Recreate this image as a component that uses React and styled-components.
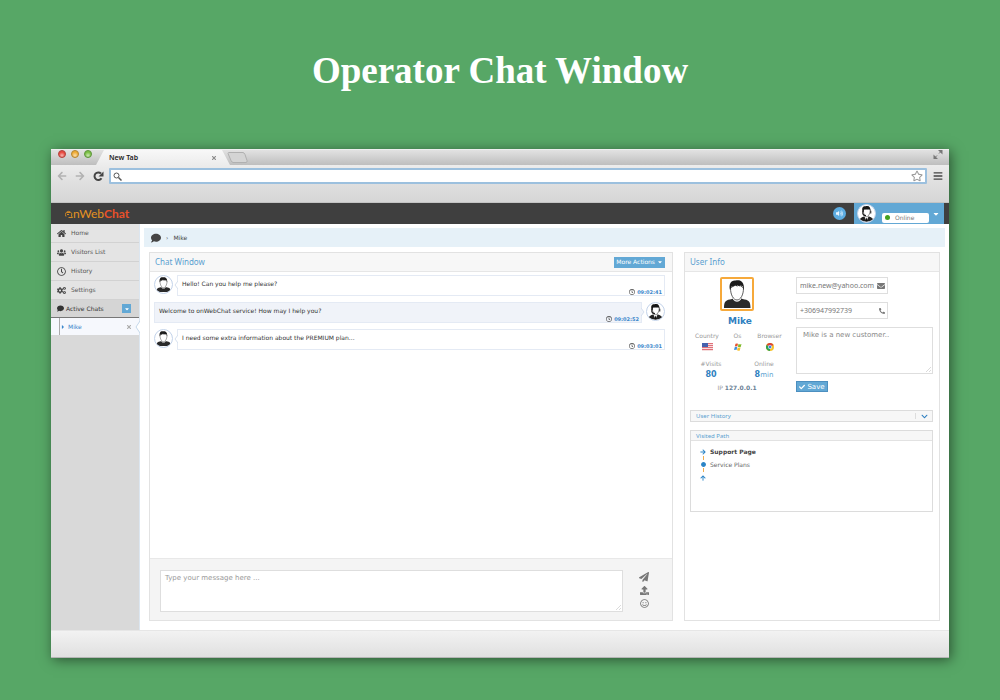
import React from "react";
import styled, { createGlobalStyle, css } from "styled-components";
import {
  FaHome, FaUsers, FaRegClock, FaCogs, FaComment, FaVolumeUp, FaEnvelope, FaPhoneAlt,
  FaPaperPlane, FaUpload, FaRegSmile, FaChevronDown, FaCaretDown, FaCaretRight, FaCheck,
  FaArrowLeft, FaArrowRight, FaRegStar, FaArrowUp, FaCircle, FaTimes, FaBars,
} from "react-icons/fa";

const sans = '"DejaVu Sans", Verdana, sans-serif';
const open = '"Noto Sans", "Open Sans", sans-serif';
const blue = "#62a8d5";

const GlobalStyle = createGlobalStyle`
  *, *::before, *::after { box-sizing: border-box; }
  body { margin: 0; background: #57a766; font-family: ${sans}; font-size: 6px; line-height: 8px; color: #555; }
  h1, h2, h3, p, ul, ol, dl, dd { margin: 0; padding: 0; }
  ul, ol { list-style: none; }
  a { color: inherit; text-decoration: none; }
  button, input, textarea { font: inherit; color: inherit; margin: 0; padding: 0; border: 0; background: none; outline: 0; border-radius: 0; }
  button { display: flex; align-items: center; justify-content: center; cursor: pointer; }
  textarea { display: block; resize: none; }
  svg { display: block; flex: none; }
`;

const Page = styled.div`
  min-height: 100vh;
  padding: 49px 51px 42px;
`;
const Title = styled.h1`
  margin-bottom: 56px;
  color: #fff;
  font: bold 37px/44px "Liberation Serif", serif;
  text-align: center;
`;
const Browser = styled.div`
  background: #fff;
  box-shadow: 2px 2px 12px rgba(0, 0, 0, 0.5);
`;

/* browser frame */
const TabStrip = styled.div`
  display: flex;
  height: 16px;
  background: linear-gradient(#e2e2e2, #bebebe);
  border-top: 1px solid #eee;
`;
const Lights = styled.div`
  display: flex;
  gap: 5px;
  padding: 0 4px 0 7px;
`;
const Light = styled.span`
  width: 8px;
  height: 8px;
  border: 1px solid ${(p) => p.$edge};
  border-radius: 50%;
  background: radial-gradient(circle at 50% 75%, #fff9, transparent 60%), ${(p) => p.$fill};
`;
const Tab = styled.div`
  display: flex;
  align-items: center;
  justify-content: space-between;
  width: 136px;
  padding: 0 15px 0 13px;
  background: linear-gradient(#f8f8f8, #ececec);
  clip-path: polygon(8px 0, 126px 0, 134px 100%, 0 100%);
  color: #222;
  font: 600 7px/12px ${open};
`;
const TabClose = styled.button`
  color: #888;
  font-size: 6px;
`;
const NewTab = styled.button`
  align-self: flex-start;
  margin-top: 2px;
  margin-left: -5px;
`;
const Expand = styled.button`
  margin-left: auto;
  padding-right: 6px;
  align-self: flex-start;
`;
const Toolbar = styled.div`
  display: flex;
  align-items: flex-start;
  height: 38px;
  padding: 3px 6px 0;
  background: linear-gradient(#ececec, #e0e0e0 45%, #d6d6d6);
  border-bottom: 1px solid #c4c4c4;
`;
const NavButton = styled.button`
  width: 18px;
  height: 16px;
  justify-content: flex-start;
  color: ${(p) => (p.$dark ? "#444" : "#b2b2b2")};
`;
const Address = styled.label`
  display: flex;
  align-items: center;
  flex: 1;
  height: 16px;
  margin-left: -2px;
  padding: 0 2px;
  border: 2px solid #9cc0de;
  border-radius: 1px;
  background: #fff;
  input { flex: 1; min-width: 0; font-size: 8px; }
`;
const MenuButton = styled.button`
  width: 16px;
  height: 16px;
  padding-left: 6px;
  color: #444;
`;
const StatusBar = styled.div`
  height: 28px;
  background: linear-gradient(#f2f2f2, #e0e0e0);
  border-top: 1px solid #e6e6e6;
  border-bottom: 1px solid #b5b5b5;
`;

/* application header */
const Header = styled.header`
  display: flex;
  align-items: center;
  height: 21px;
  padding: 0 5px 0 14px;
  background: #3f3f3f;
`;
const Logo = styled.a`
  display: flex;
  align-items: center;
  font: 12px/14px Lato, sans-serif;
  color: #e59222;
  b { color: #e8502a; }
`;
const Sound = styled.button`
  width: 13px;
  height: 13px;
  margin: 0 8px 0 auto;
  border-radius: 50%;
  background: #5dade2;
  color: #e8f5ff;
`;
const Account = styled.div`
  display: flex;
  align-items: center;
  align-self: stretch;
  width: 90px;
  padding: 0 4px 0 3px;
  background: ${blue};
`;
const Status = styled.button`
  flex: 1;
  height: 10px;
  margin: 8px 3px 0 6px;
  padding: 0 3px;
  justify-content: flex-start;
  gap: 5px;
  border-radius: 2px;
  background: #fff;
  color: #777;
`;
const Dot = styled.span`
  width: 5px;
  height: 5px;
  border-radius: 50%;
  background: #45a11f;
`;
const Avatar = styled.svg`
  width: 19px;
  height: 19px;
  border: 1px solid #c3d3ea;
  border-radius: 50%;
  background: #fff;
`;

/* sidebar */
const Body = styled.div`
  display: flex;
  min-height: 406px;
`;
const Sidebar = styled.nav`
  display: flex;
  flex-direction: column;
  width: 89px;
  flex: none;
  background: #d9d9d9;
  border-right: 1px solid #dce6f0;
`;
const NavItem = styled.a`
  display: flex;
  align-items: center;
  gap: 5px;
  height: 19px;
  padding-left: 6px;
  background: #e4e4e4;
  border-bottom: 1px solid #d2d2d2;
  svg { color: #444; }
`;
const ActiveHead = styled.div`
  display: flex;
  align-items: center;
  gap: 2px;
  height: 18px;
  padding: 0 8px 0 6px;
  background: #d5d5d5;
  border-bottom: 1px solid #777;
  color: #333;
  svg { color: #333; }
`;
const Toggle = styled.button`
  width: 9px;
  height: 9px;
  margin-left: auto;
  background: ${blue};
  svg { color: #fff; }
`;
const ActiveChat = styled.div`
  position: relative;
  display: flex;
  align-items: center;
  height: 17px;
  padding: 0 7px 0 8px;
  background: #f6f8fd;
  color: #3b87cb;
  a { margin-left: 4px; }
  button { margin-left: auto; color: #aaa; }
`;
const Branch = styled.span`
  display: flex;
  align-items: center;
  align-self: stretch;
  width: 5px;
  border-left: 1px solid #aaa;
`;
const Notch = styled.svg`
  position: absolute;
  right: -1px;
  top: 3px;
`;

/* content */
const Main = styled.main`
  flex: 1;
  min-width: 0;
  display: flex;
  flex-direction: column;
  padding: 4px 4px 9px;
`;
const Crumbs = styled.div`
  display: flex;
  align-items: center;
  gap: 5px;
  height: 19px;
  padding: 0 7px;
  background: #e6f1f8;
  color: #444;
`;
const Columns = styled.div`
  flex: 1;
  display: grid;
  grid-template-columns: minmax(0, 524fr) minmax(256px, 256fr);
  gap: 11px;
  padding: 5px 5px 0;
`;
const Panel = styled.section`
  display: flex;
  flex-direction: column;
  border: 1px solid #e2e2e2;
`;
const PanelHead = styled.div`
  display: flex;
  align-items: center;
  justify-content: space-between;
  height: 19px;
  padding: 0 7px 0 5px;
  background: #f7f7f7;
  border-bottom: 1px solid #e6e6e6;
  h2 { font: 8px/12px ${open}; color: #5a9fd0; }
`;
const More = styled.button`
  height: 11px;
  padding: 0 2px;
  gap: 2px;
  background: ${blue};
  color: #fff;
`;
const Messages = styled.ol`
  flex: 1;
  display: flex;
  flex-direction: column;
  gap: 6px;
  padding: 3px 7px 0 4px;
`;
const Message = styled.li`
  display: flex;
  align-items: flex-start;
  flex-direction: ${(p) => (p.$own ? "row-reverse" : "row")};
`;
const Bubble = styled.div`
  position: relative;
  flex: 1;
  display: flex;
  flex-direction: column;
  justify-content: space-between;
  height: 21px;
  margin: ${(p) => (p.$own ? "0 4px 0 0" : "0 0 0 4px")};
  padding: 4px 2px 0 4px;
  border: 1px solid #e4eaf4;
  background: ${(p) => (p.$own ? "#f0f3f9" : "#fff")};
  color: #333;
`;
const Tail = styled.svg`
  position: absolute;
  top: 5px;
  ${(p) => (p.$own ? css`right: -4px; transform: scaleX(-1);` : css`left: -4px;`)}
`;
const Time = styled.time`
  display: flex;
  align-items: center;
  justify-content: flex-end;
  gap: 2px;
  color: #3b87cb;
  font-weight: bold;
  font-size: 5px;
  svg { color: #444; }
`;
const Composer = styled.form`
  display: flex;
  gap: 16px;
  height: 62px;
  padding: 11px 23px 8px 10px;
  background: #f4f4f4;
  border-top: 1px solid #e8e8e8;
`;
const AreaWrap = styled.div`
  position: relative;
  flex: ${(p) => (p.$grow ? 1 : "none")};
  align-self: stretch;
`;
const Area = styled.textarea`
  width: 100%;
  height: ${(p) => p.$h}px;
  padding: ${(p) => p.$pad};
  border: 1px solid #dedede;
  background: #fff;
  font-size: 7px;
  color: #888;
  &::placeholder { color: #999; opacity: 1; }
`;
const Grip = styled.svg`
  position: absolute;
  right: 2px;
  bottom: 2px;
`;
const Tools = styled.div`
  display: flex;
  flex-direction: column;
  gap: 4px;
  padding-top: 2px;
  color: #777;
`;

/* user information */
const Info = styled.div`
  flex: 1;
  padding: 5px 6px 0 5px;
`;
const Details = styled.div`
  display: grid;
  grid-template-columns: 94px minmax(0, 1fr);
  gap: 12px;
  min-height: 133px;
`;
const Profile = styled.div`
  display: flex;
  flex-direction: column;
  align-items: center;
`;
const Portrait = styled.svg`
  width: 34px;
  height: 34px;
  border: 2px solid #f6a93b;
  border-radius: 2px;
`;
const Name = styled.h3`
  margin: 4px 0 5px 6px;
  font: bold 9px/12px ${sans};
  color: #2f7fc0;
`;
const Facts = styled.dl`
  display: grid;
  grid-template-columns: ${(p) => p.$cols};
  align-self: stretch;
  margin: 0 -4px 6px 0;
  text-align: center;
  color: #999;
  dd { display: flex; justify-content: center; align-items: center; height: 14px; }
`;
const Figure = styled.span`
  font-size: 7px;
  color: #5a9fd0;
  b { font-size: 8px; color: #2f7fc0; }
`;
const IpLine = styled.p`
  margin-top: -4px;
  color: #999;
  b { color: #6b7f95; }
`;
const Fields = styled.form`
  display: flex;
  flex-direction: column;
  align-items: flex-start;
`;
const Field = styled.label`
  display: flex;
  align-items: center;
  width: 92px;
  height: 17px;
  margin-bottom: 8px;
  padding: 0 2px 0 3px;
  border: 1px solid #dedede;
  color: #777;
  input { flex: 1; min-width: 0; font: 7px/10px ${open}; }
`;
const Save = styled.button`
  width: 32px;
  height: 11px;
  margin-top: 7px;
  gap: 2px;
  border: 1px solid #4c8fc0;
  background: ${blue};
  color: #fff;
  font-size: 7px;
`;
const Box = styled.section`
  margin-bottom: 8px;
  border: 1px solid #dcdcdc;
  min-height: ${(p) => p.$min}px;
`;
const BoxHead = styled.div`
  display: flex;
  align-items: center;
  justify-content: space-between;
  height: 10px;
  padding-left: 5px;
  background: #f7f7f7;
  border-bottom: ${(p) => (p.$line ? "1px solid #e2e2e2" : "0")};
  h3 { font: 6px/8px ${open}; color: #5a9fd0; }
  button { width: 17px; height: 6px; border-left: 1px solid #ddd; color: #2f7fc0; }
`;
const Path = styled.ol`
  padding: 6px 9px;
`;
const Step = styled.li`
  display: flex;
  gap: 4px;
  min-height: 13px;
  line-height: 10px;
  font-weight: ${(p) => (p.$current ? "bold" : "normal")};
  color: ${(p) => (p.$current ? "#444" : "#666")};
`;
const Marker = styled.span`
  display: flex;
  flex-direction: column;
  align-items: center;
  gap: 1px;
  width: 6px;
  padding-top: 2px;
  color: #2b84c6;
  i { width: 1px; height: 4px; background: #f0ad4e; }
`;

/* head and shoulders, shared by the framed portrait and the round avatars */
function Visitor() {
  return (
    <>
      <path d="M3 30c0-7 2-8 8-9l2.500-1q2.500 4 5.500 0l2.500 1c6 1 8 2 8 9z" fill="#2a2a2a" />
      <path d="M12 19v2.500q4 4.500 8 0V19z" fill="#fff" />
      <path d="M9.500 10c0 7 3 12 6.500 12s6.500-5 6.500-12q-6-6-13 0z" fill="#fff" stroke="#333" strokeWidth="0.800" />
      <path d="M9 12C7.500 6 10 2 14.500 2.500c5-1 9 1 8.500 9.500l-1.500-4q-1.500 0-3-1l.500 1.500-3-1.500.500 2-2-2q-2 2-4 1.500z" fill="#1c1c1c" />
    </>
  );
}

function Operator() {
  return (
    <>
      <path d="M3 31c0-7 4-8 9-10l4 4 4-4c5 2 9 3 9 10z" fill="#222" />
      <path d="M12 21l4 10 4-10-4 3z" fill="#fff" />
      <path d="M15 25h2l1 6h-4z" fill="#111" />
      <path d="M10 9c0 8 3 13 6 13s7-5 7-13q-6-5-13 0z" fill="#fff" stroke="#222" />
      <path d="M9 13C6 5 10 2 14 2.500c7-2 10 2 9.500 9l-2-4q-6 2-9 0-2 2-2 6z" fill="#161616" />
      <path d="M9 11v5q1 4 6 4M24 11v5" fill="none" stroke="#222" strokeWidth="2" />
    </>
  );
}

function Grabber() {
  return (
    <Grip width="5" height="5" viewBox="0 0 5 5" stroke="#ccc" strokeWidth="0.700">
      <path d="M0 5L5 0M3 5l2-2" />
    </Grip>
  );
}

const nav = [
  ["Home", FaHome],
  ["Visitors List", FaUsers],
  ["History", FaRegClock],
  ["Settings", FaCogs],
];
const messages = [
  { text: "Hello! Can you help me please?", time: "09:02:41" },
  { text: "Welcome to onWebChat service! How may I help you?", time: "09:02:52", own: true },
  { text: "I need some extra information about the PREMIUM plan...", time: "09:03:01" },
];

function BrowserFrame() {
  return (
    <>
      <TabStrip>
        <Lights>
          <Light $fill="#e9483f" $edge="#b04640" />
          <Light $fill="#f0ac35" $edge="#b28636" />
          <Light $fill="#7bc043" $edge="#5f9440" />
        </Lights>
        <Tab>
          New Tab
          <TabClose aria-label="Close tab"><FaTimes size={6} /></TabClose>
        </Tab>
        <NewTab aria-label="Open a tab">
          <svg width="21" height="11" viewBox="0 0 21 11">
            <path d="M2 .500h14q1 0 2 2l2 6q.500 2-1 2H6q-1 0-2-2l-3-7q0-1 1-1z" fill="#d4d4d4" stroke="#b0b0b0" />
          </svg>
        </NewTab>
        <Expand aria-label="Full screen">
          <svg width="10" height="9" viewBox="0 0 10 9" fill="#777" stroke="#777">
            <path d="M9.500 0v4.500L5 0zM.500 9V4.500L5 9z" stroke="none" />
            <path d="M6 3.500L8 1.500M2 7.500l2-2" />
          </svg>
        </Expand>
      </TabStrip>
      <Toolbar>
        <NavButton aria-label="Back"><FaArrowLeft size={10} /></NavButton>
        <NavButton aria-label="Forward"><FaArrowRight size={10} /></NavButton>
        <NavButton aria-label="Reload" $dark>
          <svg width="11" height="11" viewBox="0 0 11 11" fill="none" stroke="currentColor" strokeWidth="2">
            <path d="M8.500 7.300A3.800 3.800 0 1 1 8 2.500" />
            <path d="M10.500.500v5h-5z" fill="currentColor" stroke="none" />
          </svg>
        </NavButton>
        <Address>
          <svg width="9" height="9" viewBox="0 0 9 9" fill="none" stroke="#555">
            <circle cx="3.500" cy="3.500" r="2.500" />
            <path d="M5.500 5.500l3 3" strokeWidth="1.500" />
          </svg>
          <input type="text" aria-label="Address" />
          <FaRegStar size={12} color="#999" />
        </Address>
        <MenuButton aria-label="Menu"><FaBars size={10} /></MenuButton>
      </Toolbar>
    </>
  );
}

function AppHeader() {
  return (
    <Header>
      <Logo href="#">
        <svg width="8" height="8" viewBox="0 0 8 8" fill="none" stroke="#e59222">
          <path d="M1 6.500A3.200 3.200 0 1 1 6.500 6L7.500 7.500H3.500M2 2.500h3M2 4.500h2" strokeWidth="0.900" />
        </svg>
        <span>nWeb<b>Chat</b></span>
      </Logo>
      <Sound aria-label="Sound"><FaVolumeUp size={7} /></Sound>
      <Account>
        <Avatar viewBox="0 0 32 32"><Operator /></Avatar>
        <Status><Dot />Online</Status>
        <FaCaretDown size={8} color="#fff" />
      </Account>
    </Header>
  );
}

function SideNav() {
  return (
    <Sidebar>
      {nav.map(([label, Icon]) => (
        <NavItem href="#" key={label}><Icon size={9} />{label}</NavItem>
      ))}
      <ActiveHead>
        <FaComment size={7} />
        Active Chats
        <Toggle aria-label="Collapse"><FaCaretDown size={6} /></Toggle>
      </ActiveHead>
      <ActiveChat>
        <Branch><FaCaretRight size={6} /></Branch>
        <a href="#">Mike</a>
        <button aria-label="Close chat"><FaTimes size={6} /></button>
        <Notch width="5" height="12" viewBox="0 0 5 12">
          <path d="M5 0L1 6l4 6" fill="#fff" stroke="#c3d7ea" />
        </Notch>
      </ActiveChat>
    </Sidebar>
  );
}

function ChatPanel() {
  return (
    <Panel>
      <PanelHead>
        <h2>Chat Window</h2>
        <More>More Actions <FaCaretDown size={6} /></More>
      </PanelHead>
      <Messages>
        {messages.map((m) => (
          <Message key={m.time} $own={m.own}>
            <Avatar viewBox="0 0 32 32">{m.own ? <Operator /> : <Visitor />}</Avatar>
            <Bubble $own={m.own}>
              <Tail $own={m.own} width="4" height="8" viewBox="0 0 4 8">
                <path d="M4 0L1 4l3 4" fill={m.own ? "#f0f3f9" : "#fff"} stroke="#d6e0ee" />
              </Tail>
              <p>{m.text}</p>
              <Time><FaRegClock size={6} />{m.time}</Time>
            </Bubble>
          </Message>
        ))}
      </Messages>
      <Composer>
        <AreaWrap $grow>
          <Area aria-label="Message" placeholder="Type your message here ..." $h={42} $pad="3px 4px" />
          <Grabber />
        </AreaWrap>
        <Tools>
          <button type="button" aria-label="Send"><FaPaperPlane size={10} /></button>
          <button type="button" aria-label="Upload"><FaUpload size={9} /></button>
          <button type="button" aria-label="Emoji"><FaRegSmile size={9} /></button>
        </Tools>
      </Composer>
    </Panel>
  );
}

function Flag() {
  return (
    <svg width="11" height="8" viewBox="0 0 11 8">
      <path fill="#f6dede" d="M0 0h11v8H0z" />
      <path stroke="#e0707a" d="M0 .500h11M0 2.500h11M0 4.500h11M0 6.500h11" />
      <path fill="#4562ae" d="M0 0h6v4H0z" />
    </svg>
  );
}
function Windows() {
  return (
    <svg width="8" height="8" viewBox="0 0 8 8">
      <path fill="#e8542c" d="M1.500.800q1.500-.800 2.500 0L3.300 3.600q-1.300-.600-2.500 0z" />
      <path fill="#7fba2b" d="M4.500 1q1.500.800 3 0L6.700 4q-1.500.600-2.800-.200z" />
      <path fill="#3f8fdc" d="M.700 4.200q1.300-.700 2.500 0L2.500 7Q1.300 6.300 0 7z" />
      <path fill="#f8c12c" d="M3.700 4.400q1.500.700 2.800.100L5.800 7.500q-1.500.600-2.800-.200z" />
    </svg>
  );
}
function Chrome() {
  return (
    <svg width="8" height="8" viewBox="0 0 8 8">
      <circle cx="4" cy="4" r="4" fill="#f5c32c" />
      <path fill="#dc4437" d="M4 4L.500 2A4 4 0 0 1 7.500 2z" />
      <path fill="#31a350" d="M4 4L.500 2A4 4 0 0 0 4 8z" />
      <circle cx="4" cy="4" r="1.900" fill="#fff" />
      <circle cx="4" cy="4" r="1.400" fill="#4083e8" />
    </svg>
  );
}

function UserPanel() {
  return (
    <Panel>
      <PanelHead><h2>User Info</h2></PanelHead>
      <Info>
        <Details>
          <Profile>
            <Portrait viewBox="1 1 30 30"><Visitor /></Portrait>
            <Name>Mike</Name>
            <Facts $cols="34px 27px 1fr">
              <dt>Country</dt><dt>Os</dt><dt>Browser</dt>
              <dd><Flag /></dd><dd><Windows /></dd><dd><Chrome /></dd>
            </Facts>
            <Facts $cols="42px 64px">
              <dt>#Visits</dt><dt>Online</dt>
              <dd><Figure><b>80</b></Figure></dd>
              <dd><Figure><b>8</b>min</Figure></dd>
            </Facts>
            <IpLine>IP <b>127.0.0.1</b></IpLine>
          </Profile>
          <Fields>
            <Field>
              <input type="email" aria-label="Email" defaultValue="mike.new@yahoo.com" />
              <FaEnvelope size={8} />
            </Field>
            <Field>
              <input type="tel" aria-label="Phone" defaultValue="+306947992739" />
              <FaPhoneAlt size={6} />
            </Field>
            <AreaWrap>
              <Area aria-label="Notes" defaultValue="Mike is a new customer.." $h={47} $pad="3px 6px" />
              <Grabber />
            </AreaWrap>
            <Save type="button"><FaCheck size={6} />Save</Save>
          </Fields>
        </Details>
        <Box>
          <BoxHead>
            <h3>User History</h3>
            <button aria-label="Expand history"><FaChevronDown size={7} /></button>
          </BoxHead>
        </Box>
        <Box $min={82}>
          <BoxHead $line><h3>Visited Path</h3></BoxHead>
          <Path>
            <Step $current><Marker><FaArrowRight size={6} /><i /></Marker>Support Page</Step>
            <Step><Marker><FaCircle size={5} /><i /></Marker>Service Plans</Step>
            <Step><Marker><FaArrowUp size={6} /></Marker></Step>
          </Path>
        </Box>
      </Info>
    </Panel>
  );
}

export default function App() {
  return (
    <Page>
      <GlobalStyle />
      <Title>Operator Chat Window</Title>
      <Browser>
        <BrowserFrame />
        <AppHeader />
        <Body>
          <SideNav />
          <Main>
            <Crumbs>
              <FaComment size={10} />
              <span>›</span>
              <span>Mike</span>
            </Crumbs>
            <Columns>
              <ChatPanel />
              <UserPanel />
            </Columns>
          </Main>
        </Body>
        <StatusBar />
      </Browser>
    </Page>
  );
}
